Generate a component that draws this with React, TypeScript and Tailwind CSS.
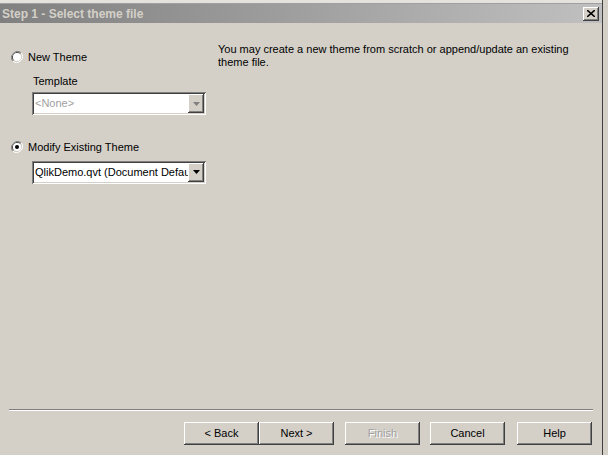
import type { ReactNode } from 'react';

const raised =
  'bg-[#d4d0c8] shadow-[inset_-1px_-1px_0_#404040,inset_1px_1px_0_#ffffff,inset_-2px_-2px_0_#808080,inset_2px_2px_0_#d4d0c8]';
const sunken =
  'shadow-[inset_1px_1px_0_#808080,inset_-1px_-1px_0_#ffffff,inset_2px_2px_0_#404040,inset_-2px_-2px_0_#d4d0c8]';

function Radio({ checked }: { checked?: boolean }) {
  return (
    <svg width="12" height="12" viewBox="0 0 12 12" className="shrink-0">
      <path d="M10.2 1.8 A6 6 0 0 0 1.8 10.2" fill="none" stroke="#808080" strokeWidth="1" />
      <path d="M1.8 10.2 A6 6 0 0 0 10.2 1.8" fill="none" stroke="#ffffff" strokeWidth="1" />
      <path d="M9.5 2.5 A5 5 0 0 0 2.5 9.5" fill="none" stroke="#404040" strokeWidth="1" />
      <path d="M2.5 9.5 A5 5 0 0 0 9.5 2.5" fill="none" stroke="#d4d0c8" strokeWidth="1" />
      <circle cx="6" cy="6" r="4" fill="#ffffff" />
      {checked && <circle cx="6" cy="6" r="2" fill="#000000" />}
    </svg>
  );
}

function Combo({ value, disabled }: { value: string; disabled?: boolean }) {
  return (
    <div className={`flex h-[23px] w-[174px] bg-white p-[2px] ${sunken}`}>
      <div
        className={`min-w-0 flex-1 overflow-hidden whitespace-nowrap pl-[1px] leading-[19px] ${
          disabled ? 'text-[#a0a0a0]' : 'text-black'
        }`}
      >
        {value}
      </div>
      <div className={`flex w-[16px] shrink-0 items-center justify-center ${raised}`}>
        <svg width="7" height="4" viewBox="0 0 7 4">
          <path d="M0 0h7L3.5 4z" fill={disabled ? '#808080' : '#000000'} />
        </svg>
      </div>
    </div>
  );
}

function Btn({ children, disabled }: { children: ReactNode; disabled?: boolean }) {
  return (
    <div
      className={`flex h-[23px] w-[75px] items-center justify-center ${raised} ${
        disabled ? 'text-[#a0a0a0] [text-shadow:1px_1px_0_#ffffff]' : 'text-black'
      }`}
    >
      {children}
    </div>
  );
}

export default function App() {
  return (
    <div className="flex h-[455px] w-[608px] overflow-hidden bg-[#d4d0c8] font-['Liberation_Sans',Arial,sans-serif] text-[11px] text-black">
      <div className="flex w-[602px] flex-col">
        <div className="h-[4px] border-b border-[#a0a0a0] bg-[#e4e2dc]" />
        <div className="flex h-[19px] items-center justify-between bg-gradient-to-r from-[#808080] to-[#c0c0c0] pl-[2px] pr-[3px]">
          <span className="text-[12px] font-bold text-[#d4d0c8]">Step 1 - Select theme file</span>
          <div className={`flex h-[14px] w-[16px] items-center justify-center ${raised}`}>
            <svg width="8" height="7" viewBox="0 0 8 7">
              <path d="M0 0l8 7M8 0L0 7" stroke="#000" strokeWidth="1.6" />
            </svg>
          </div>
        </div>

        <div className="flex flex-1 pt-[20px]">
          <div className="flex w-[218px] flex-col pl-[11px]">
            <div className="mt-[6px] flex items-center gap-[5px]">
              <Radio />
              <span>New Theme</span>
            </div>
            <div className="mt-[7px] pl-[22px]">Template</div>
            <div className="mt-[3px] pl-[21px]">
              <Combo value="<None>" disabled />
            </div>
            <div className="mt-[24px] flex items-center gap-[5px]">
              <Radio checked />
              <span>Modify Existing Theme</span>
            </div>
            <div className="mt-[5px] pl-[21px]">
              <Combo value="QlikDemo.qvt (Document Default)" />
            </div>
          </div>
          <div className="w-[380px] leading-[13px]">
            You may create a new theme from scratch or append/update an existing theme file.
          </div>
        </div>

        <div className="mx-[9px] h-[2px] border-t border-b border-t-[#808080] border-b-white" />
        <div className="flex justify-end gap-[11px] pb-[10px] pl-[9px] pr-[10px] pt-[11px]">
          <div className="flex">
            <Btn>&lt; Back</Btn>
            <Btn>Next &gt;</Btn>
          </div>
          <Btn disabled>Finish</Btn>
          <div className="ml-[-1px]">
            <Btn>Cancel</Btn>
          </div>
          <div className="ml-[1px]">
            <Btn>Help</Btn>
          </div>
        </div>
      </div>
      <div className="w-[1px] bg-[#404040]" />
      <div className="flex-1 bg-[#d4d0c8]" />
    </div>
  );
}
